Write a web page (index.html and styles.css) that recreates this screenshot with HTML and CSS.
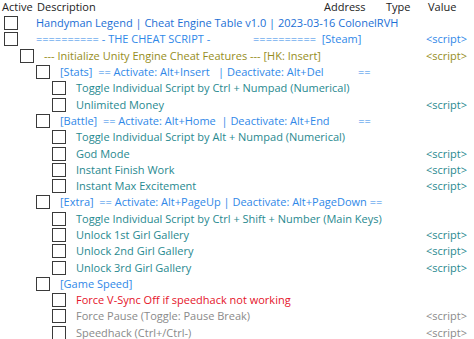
FILE: index.html
```html
<!DOCTYPE html>
<html lang="en">
<head>
    <meta charset="UTF-8">
    <title>Cheat Table</title>
    <link rel="stylesheet" href="styles.css">
</head>
<body>
    <div class="table">
        <div class="head">
            <span class="h-active">Active</span>
            <span class="h-desc">Description</span>
            <span class="h-addr">Address</span>
            <span class="h-type">Type</span>
            <span class="h-value">Value</span>
        </div>

        <div class="row lv1 title"><span class="box"></span><span class="desc">Handyman Legend | Cheat Engine Table v1.0 | 2023-03-16 ColonelRVH</span><span class="val"></span></div>
        <div class="row lv1 blue"><span class="box"></span><span class="desc">========== - THE CHEAT SCRIPT -               ==========  [Steam]</span><span class="val">&lt;script&gt;</span></div>
        <div class="row lv2 olive"><span class="box"></span><span class="desc">--- Initialize Unity Engine Cheat Features --- [HK: Insert]</span><span class="val">&lt;script&gt;</span></div>

        <div class="row lv3 blue"><span class="box"></span><span class="desc">[Stats]  == Activate: Alt+Insert   | Deactivate: Alt+Del            ==</span><span class="val"></span></div>
        <div class="row lv4 teal"><span class="box"></span><span class="desc">Toggle Individual Script by Ctrl + Numpad (Numerical)</span><span class="val"></span></div>
        <div class="row lv4 teal"><span class="box"></span><span class="desc">Unlimited Money</span><span class="val">&lt;script&gt;</span></div>

        <div class="row lv3 blue"><span class="box"></span><span class="desc">[Battle]  == Activate: Alt+Home  | Deactivate: Alt+End          ==</span><span class="val"></span></div>
        <div class="row lv4 teal"><span class="box"></span><span class="desc">Toggle Individual Script by Alt + Numpad (Numerical)</span><span class="val"></span></div>
        <div class="row lv4 teal"><span class="box"></span><span class="desc">God Mode</span><span class="val">&lt;script&gt;</span></div>
        <div class="row lv4 teal"><span class="box"></span><span class="desc">Instant Finish Work</span><span class="val">&lt;script&gt;</span></div>
        <div class="row lv4 teal"><span class="box"></span><span class="desc">Instant Max Excitement</span><span class="val">&lt;script&gt;</span></div>

        <div class="row lv3 blue"><span class="box"></span><span class="desc">[Extra]  == Activate: Alt+PageUp | Deactivate: Alt+PageDown ==</span><span class="val"></span></div>
        <div class="row lv4 teal"><span class="box"></span><span class="desc">Toggle Individual Script by Ctrl + Shift + Number (Main Keys)</span><span class="val"></span></div>
        <div class="row lv4 teal"><span class="box"></span><span class="desc">Unlock 1st Girl Gallery</span><span class="val">&lt;script&gt;</span></div>
        <div class="row lv4 teal"><span class="box"></span><span class="desc">Unlock 2nd Girl Gallery</span><span class="val">&lt;script&gt;</span></div>
        <div class="row lv4 teal"><span class="box"></span><span class="desc">Unlock 3rd Girl Gallery</span><span class="val">&lt;script&gt;</span></div>

        <div class="row lv3 blue"><span class="box"></span><span class="desc">[Game Speed]</span><span class="val"></span></div>
        <div class="row lv4 red"><span class="box"></span><span class="desc">Force V-Sync Off if speedhack not working</span><span class="val"></span></div>
        <div class="row lv4 grey"><span class="box"></span><span class="desc">Force Pause (Toggle: Pause Break)</span><span class="val">&lt;script&gt;</span></div>
        <div class="row lv4 grey"><span class="box"></span><span class="desc">Speedhack (Ctrl+/Ctrl-)</span><span class="val">&lt;script&gt;</span></div>
    </div>
</body>
</html>
```

FILE: styles.css
```css
body {
    margin: 0;
    background-color: #fff;
    font-family: "Open Sans", sans-serif;
    font-size: 11px;
    overflow: hidden;
}

.table {
    width: 474px;
}

.head {
    display: grid;
    grid-template-columns: 35px 287px 62px 42px 1fr;
    height: 15px;
    line-height: 13px;
    color: #222;
    padding-left: 2px;
}

.row {
    display: grid;
    grid-template-columns: 13px 1fr 48px;
    align-items: center;
    height: 16.3px;
    white-space: pre;
}

.box {
    width: 12px;
    height: 12px;
    border: 1px solid #3a3a3a;
    background-color: #fff;
}

.desc {
    min-width: 0;
    overflow: visible;
    padding-left: 11px;
    line-height: 16px;
}

.val {
    line-height: 16px;
}

.lv1 { padding-left: 4px; }
.lv1 .desc { padding-left: 19px; }
.lv2 { padding-left: 20px; }
.lv3 { padding-left: 36px; }
.lv4 { padding-left: 52px; }

.title { color: #1b6fd5; }
.blue { color: #3088e8; }
.olive { color: #968d1c; }
.teal { color: #28898f; }
.red { color: #e5142a; }
.grey { color: #8a8a8a; }
```
